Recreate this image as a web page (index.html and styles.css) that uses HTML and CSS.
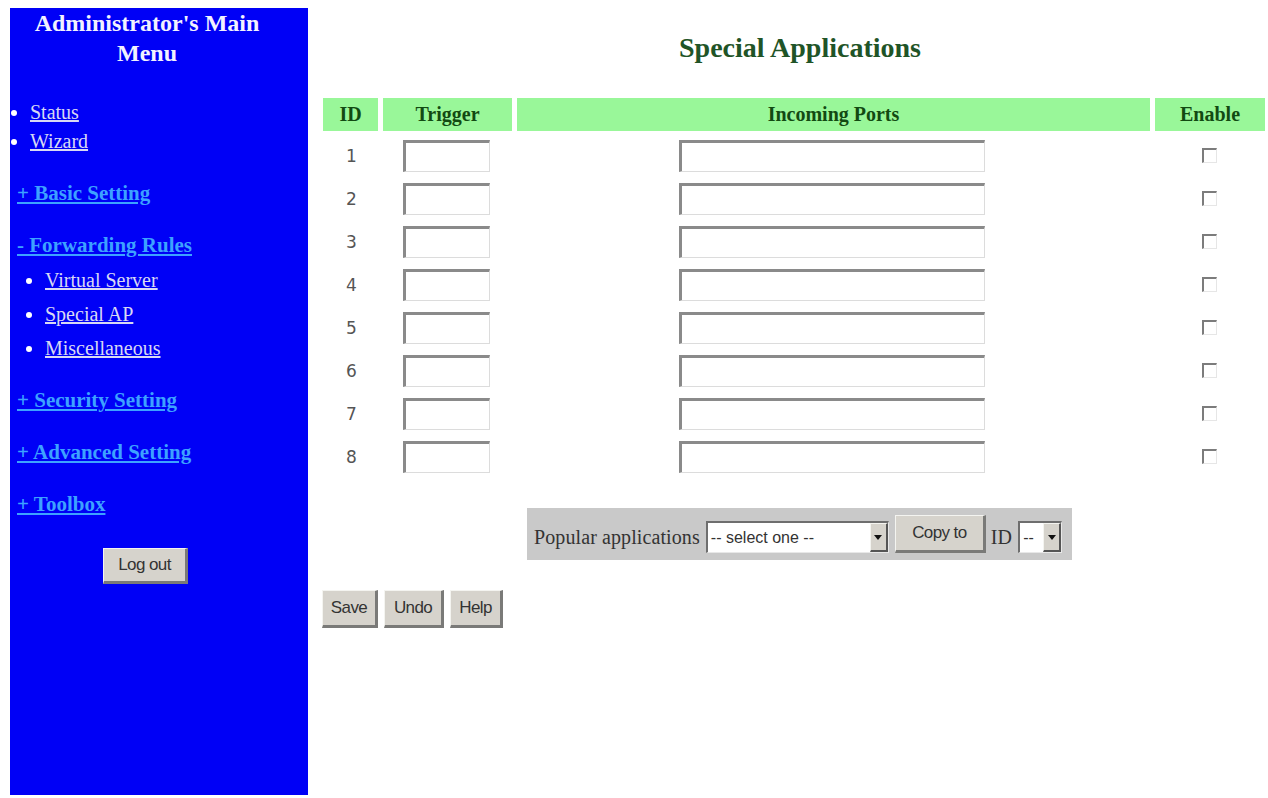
FILE: index.html
```html
<!DOCTYPE html>
<html>
<head>
<meta charset="utf-8">
<title>Special Applications</title>
<link rel="stylesheet" href="styles.css">
</head>
<body>
<div class="page">
  <aside class="sidebar">
    <h1 class="menu-title">Administrator's Main<br>Menu</h1>
    <ul class="top-links">
      <li><a href="#">Status</a></li>
      <li><a href="#">Wizard</a></li>
    </ul>
    <a class="section" href="#">+ Basic Setting</a>
    <a class="section" href="#">- Forwarding Rules</a>
    <ul class="sub-links">
      <li><a href="#">Virtual Server</a></li>
      <li><a href="#">Special AP</a></li>
      <li><a href="#">Miscellaneous</a></li>
    </ul>
    <a class="section sec-after" href="#">+ Security Setting</a>
    <a class="section" href="#">+ Advanced Setting</a>
    <a class="section" href="#">+ Toolbox</a>
    <div class="logout-wrap"><button class="btn logout">Log out</button></div>
  </aside>

  <main class="main">
    <h2 class="page-title">Special Applications</h2>
    <div class="grid">
      <div class="hd">ID</div>
      <div class="hd">Trigger</div>
      <div class="hd">Incoming Ports</div>
      <div class="hd">Enable</div>

      <div class="num">1</div><div class="cell"><input class="txt trig" type="text"></div><div class="cell"><input class="txt ports" type="text"></div><div class="cell"><input class="chk" type="checkbox"></div>
      <div class="num">2</div><div class="cell"><input class="txt trig" type="text"></div><div class="cell"><input class="txt ports" type="text"></div><div class="cell"><input class="chk" type="checkbox"></div>
      <div class="num">3</div><div class="cell"><input class="txt trig" type="text"></div><div class="cell"><input class="txt ports" type="text"></div><div class="cell"><input class="chk" type="checkbox"></div>
      <div class="num">4</div><div class="cell"><input class="txt trig" type="text"></div><div class="cell"><input class="txt ports" type="text"></div><div class="cell"><input class="chk" type="checkbox"></div>
      <div class="num">5</div><div class="cell"><input class="txt trig" type="text"></div><div class="cell"><input class="txt ports" type="text"></div><div class="cell"><input class="chk" type="checkbox"></div>
      <div class="num">6</div><div class="cell"><input class="txt trig" type="text"></div><div class="cell"><input class="txt ports" type="text"></div><div class="cell"><input class="chk" type="checkbox"></div>
      <div class="num">7</div><div class="cell"><input class="txt trig" type="text"></div><div class="cell"><input class="txt ports" type="text"></div><div class="cell"><input class="chk" type="checkbox"></div>
      <div class="num">8</div><div class="cell"><input class="txt trig" type="text"></div><div class="cell"><input class="txt ports" type="text"></div><div class="cell"><input class="chk" type="checkbox"></div>
    </div>

    <div class="popular-row">
      <div class="popular">
        <span class="pop-label">Popular applications</span>
        <span class="sel sel-apps"><span class="sel-text">-- select one --</span><span class="sel-arrow"></span></span>
        <button class="btn copy">Copy to</button>
        <span class="pop-label id-label">ID</span>
        <span class="sel sel-id"><span class="sel-text">--</span><span class="sel-arrow"></span></span>
      </div>
    </div>

    <div class="actions">
      <button class="btn act save">Save</button>
      <button class="btn act undo">Undo</button>
      <button class="btn act help">Help</button>
    </div>
  </main>
</div>
</body>
</html>
```
FILE: styles.css
```css
html, body {
  margin: 0;
  padding: 0;
  background: #ffffff;
}
body {
  padding: 8px 0 0 10px;
  font-family: "Liberation Serif", "Times New Roman", serif;
}
.page {
  display: flex;
  align-items: flex-start;
}
.sidebar {
  width: 298px;
  height: 787px;
  flex: none;
  background: #0000f6;
  box-sizing: border-box;
  padding: 0 24px 0 0;
  display: flex;
  flex-direction: column;
  align-items: flex-start;
}
.menu-title {
  margin: 0;
  width: 100%;
  text-align: center;
  font-size: 24px;
  line-height: 30px;
  font-weight: bold;
  color: #f2f2ff;
}
.top-links {
  margin: 30px 0 0 0;
  padding: 0 0 0 20px;
  list-style: disc;
  color: #ffffff;
  font-size: 20px;
  line-height: 29px;
}
.top-links a, .sub-links a {
  color: #d8d8f4;
  text-decoration: underline;
}
.section {
  display: block;
  margin: 22px 0 0 7px;
  font-size: 21px;
  line-height: 30px;
  font-weight: bold;
  color: #3da2ff;
  text-decoration: underline;
}
.sub-links {
  margin: 3px 0 0 0;
  padding: 0 0 0 35px;
  list-style: disc;
  color: #ffffff;
  font-size: 20px;
  line-height: 34px;
}
.sec-after {
  margin-top: 20px;
}
.logout-wrap {
  width: 100%;
  display: flex;
  justify-content: center;
  margin-top: 29px;
  padding-right: 3px;
  box-sizing: border-box;
}
.btn {
  font-family: "Liberation Sans", Arial, sans-serif;
  font-size: 17px;
  color: #333333;
  background: #d6d3cc;
  border-style: solid;
  border-width: 1px 3px 3px 1px;
  border-color: #f4f4f0 #7a7a78 #7a7a78 #f4f4f0;
  padding: 0;
  box-sizing: border-box;
  letter-spacing: -0.6px;
}
.logout {
  width: 85px;
  height: 36px;
}

.main {
  flex: 1;
  padding: 23px 3px 0 15px;
  box-sizing: border-box;
}
.page-title {
  margin: 0 0 33px 0;
  padding-left: 12px;
  text-align: center;
  font-size: 28px;
  line-height: 34px;
  font-weight: bold;
  color: #1f5427;
}
.grid {
  display: grid;
  grid-template-columns: 55px 129px 633px 110px;
  grid-template-rows: 36px repeat(8, 43px);
  column-gap: 5px;
}
.hd {
  background: #99f799;
  color: #124a12;
  font-weight: bold;
  font-size: 20px;
  display: flex;
  align-items: center;
  justify-content: center;
  margin-bottom: 3px;
}
.num {
  display: flex;
  align-items: center;
  justify-content: center;
  font-family: "DejaVu Sans", "Liberation Sans", sans-serif;
  font-size: 17px;
  color: #555555;
  padding-left: 2px;
}
.cell {
  display: flex;
  align-items: center;
  justify-content: center;
}
.txt {
  height: 32px;
  box-sizing: border-box;
  margin: 0;
  background: #ffffff;
  border-style: solid;
  border-width: 3px 1px 1px 3px;
  border-color: #8a8a8a #dcdcdc #dcdcdc #8a8a8a;
  outline: none;
}
.trig { width: 87px; margin-left: -3px; }
.ports { width: 306px; margin-left: -4px; }
.chk {
  appearance: none;
  -webkit-appearance: none;
  width: 15px;
  height: 15px;
  margin: 0 0 0 -2px;
  box-sizing: border-box;
  background: #ffffff;
  border-style: solid;
  border-width: 2px 1px 1px 2px;
  border-color: #7c7c7c #e6e6e6 #e6e6e6 #7c7c7c;
}

.popular-row {
  display: flex;
  justify-content: center;
  margin-top: 30px;
  padding-left: 11px;
}
.popular {
  width: 545px;
  height: 52px;
  box-sizing: border-box;
  background: #c9c9c9;
  display: flex;
  align-items: center;
  padding: 6px 0 0 7px;
}
.pop-label {
  font-size: 20px;
  color: #333333;
  letter-spacing: 0.1px;
}
.sel {
  display: flex;
  align-items: stretch;
  height: 32px;
  box-sizing: border-box;
  background: #ffffff;
  border-style: solid;
  border-width: 2px 1px 1px 2px;
  border-color: #6e6e6e #e8e8e8 #e8e8e8 #6e6e6e;
  font-family: "Liberation Sans", Arial, sans-serif;
  font-size: 16px;
  color: #333333;
  margin-left: 6px;
}
.sel-apps { width: 183px; }
.sel-id { width: 44px; }
.sel-text {
  flex: 1;
  display: flex;
  align-items: center;
  padding-left: 3px;
  white-space: nowrap;
  overflow: hidden;
}
.sel-arrow {
  width: 18px;
  flex: none;
  background: #d6d3cc;
  border-style: solid;
  border-width: 1px 2px 2px 1px;
  border-color: #f4f4f0 #555555 #555555 #f4f4f0;
  box-sizing: border-box;
  display: flex;
  align-items: center;
  justify-content: center;
}
.sel-arrow::before {
  content: "";
  width: 0;
  height: 0;
  border-left: 4px solid transparent;
  border-right: 4px solid transparent;
  border-top: 5px solid #111111;
}
.copy {
  width: 91px;
  height: 38px;
  margin: -6px 0 0 6px;
}
.id-label {
  margin-left: 5px;
}
.sel-id { margin-left: 6px; }

.actions {
  display: flex;
  gap: 6px;
  margin: 30px 0 0 -1px;
}
.act { height: 38px; }
.save { width: 56px; }
.undo { width: 60px; }
.help { width: 53px; }
```
